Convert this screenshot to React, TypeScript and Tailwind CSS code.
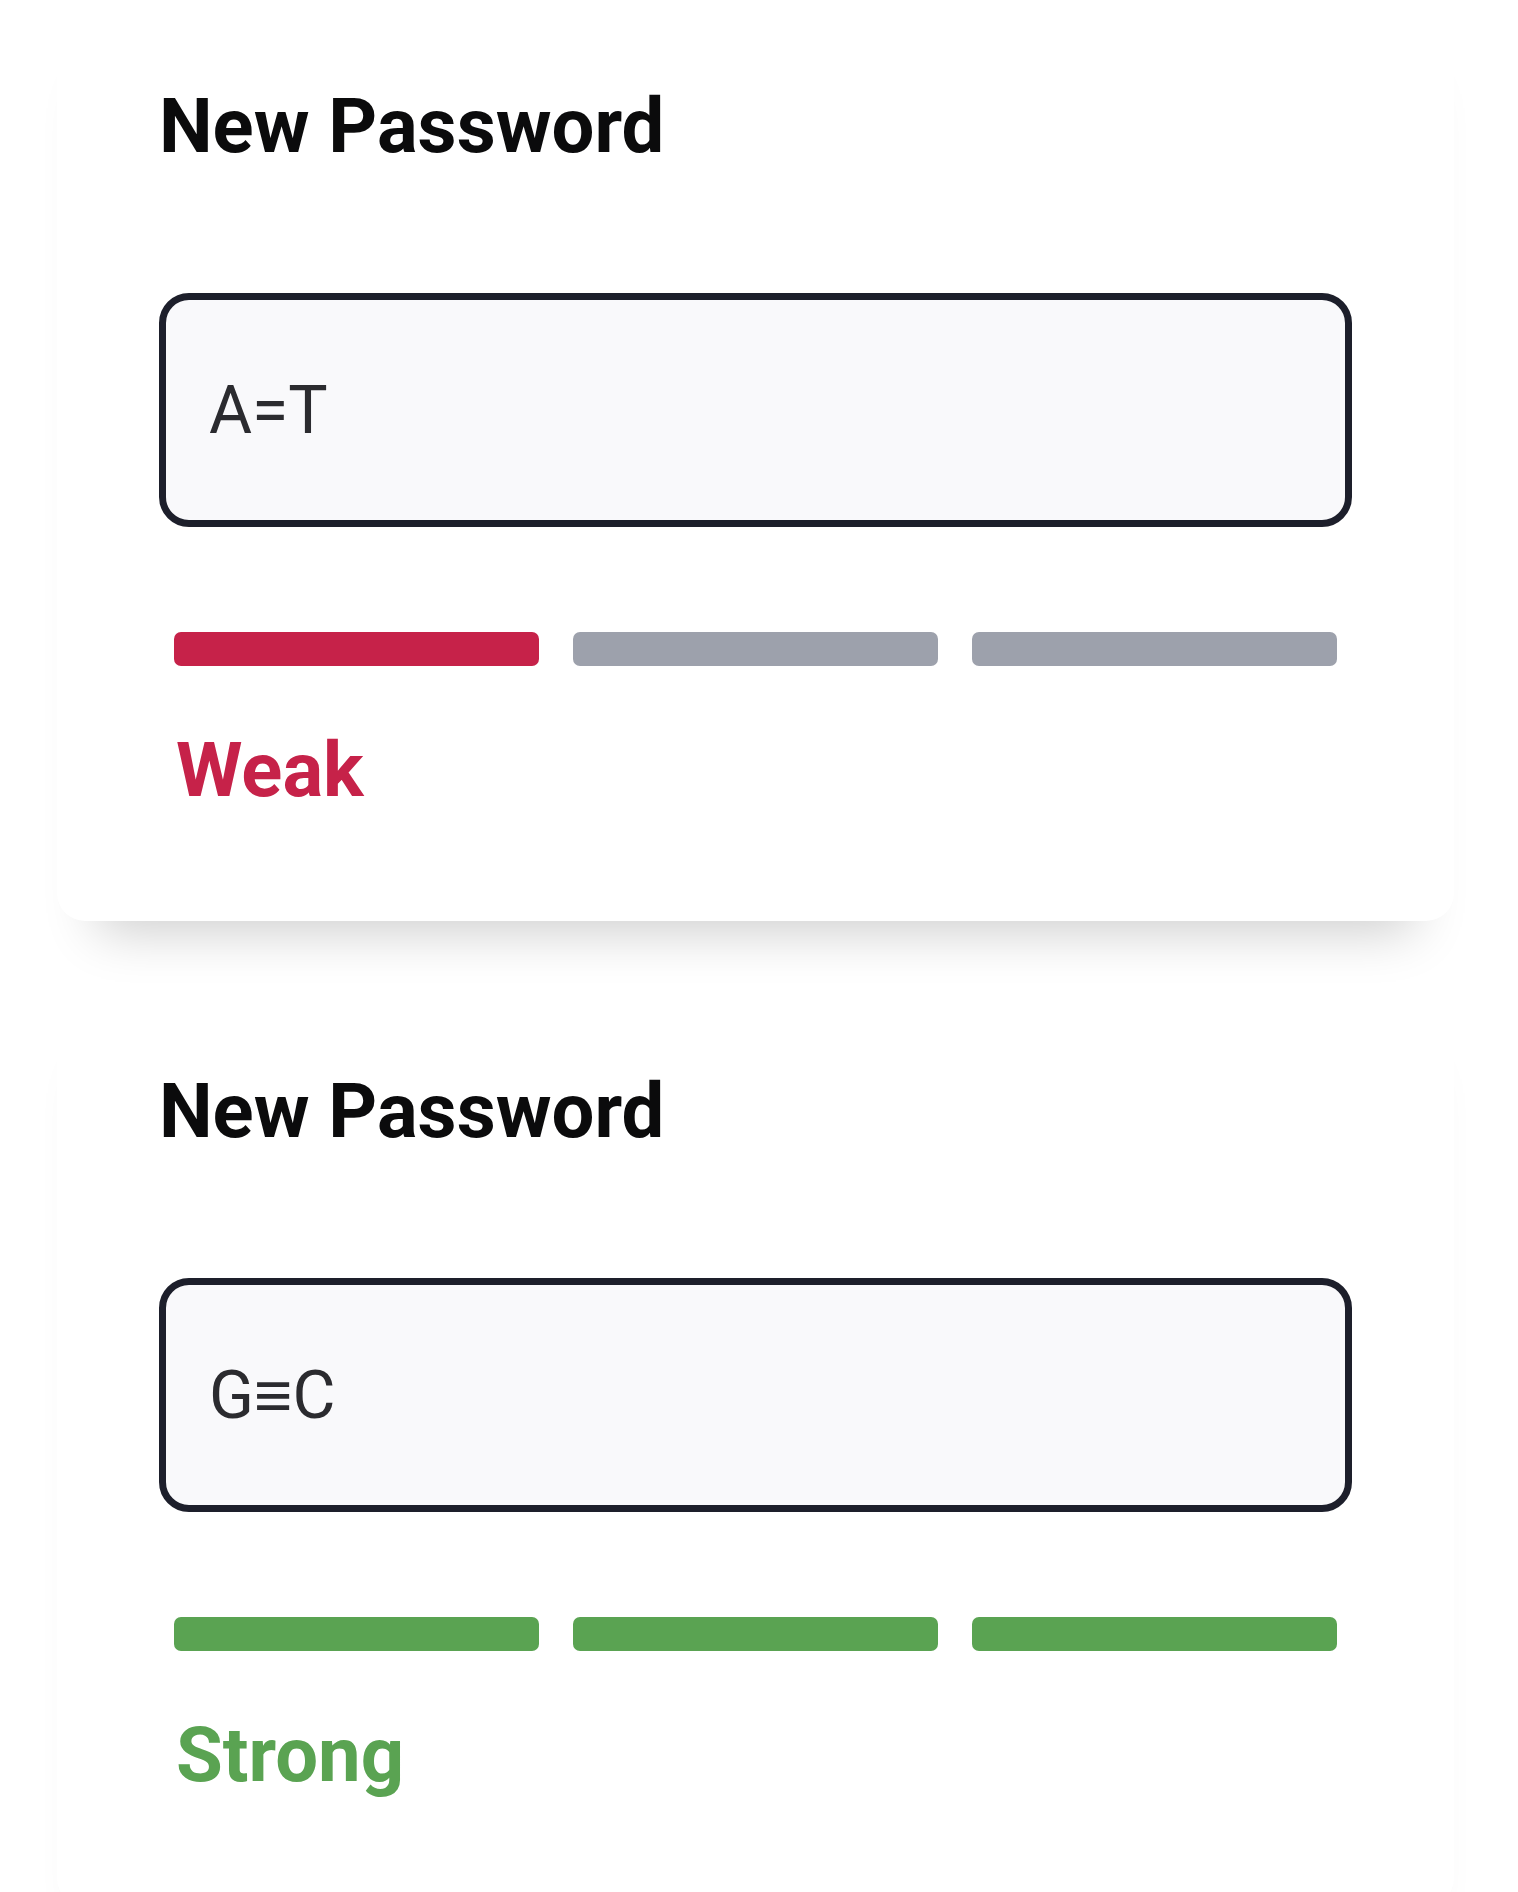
type Level = 'weak' | 'strong'

const levels: Record<Level, { label: string; filled: number; bar: string; text: string }> = {
	weak: { label: 'Weak', filled: 1, bar: 'bg-[#c62249]', text: 'text-[#c62249]' },
	strong: { label: 'Strong', filled: 3, bar: 'bg-[#5aa352]', text: 'text-[#5aa352]' },
}

function PasswordCard({ value, level }: { value: string; level: Level }) {
	const l = levels[level]
	return (
		<section className="h-[921px] w-[1397px] shrink-0 rounded-b-[28px] bg-white px-[102px] pt-[88px] shadow-[0_50px_50px_-40px_rgba(0,0,0,0.2)]">
			<h2 className="text-[76px] font-bold leading-none text-[#0b0b0c]">New Password</h2>
			<input
				type="text"
				readOnly
				value={value}
				className="mt-[129px] block h-[234px] w-full rounded-[30px] border-[7px] border-[#1d1f2b] bg-[#f9f9fb] pl-[43px] text-[66px] leading-none text-[#2b2b2f] outline-none"
			/>
			<div className="mt-[105px] grid grid-cols-3 gap-[34px] px-[15px]">
				{[0, 1, 2].map((i) => (
					<div
						key={i}
						className={`h-[34px] rounded-[7px] ${i < l.filled ? l.bar : 'bg-[#9da1ac]'}`}
					/>
				))}
			</div>
			<p className={`mt-[66px] pl-[17px] text-[76px] font-bold leading-none ${l.text}`}>{l.label}</p>
		</section>
	)
}

export default function App() {
	return (
		<div className="h-[1892px] overflow-hidden bg-white font-['Roboto','Liberation_Sans',sans-serif]">
			<div className="flex flex-col gap-[64px] pl-[57px]">
				<PasswordCard value="A=T" level="weak" />
				<PasswordCard value="G≡C" level="strong" />
			</div>
		</div>
	)
}
